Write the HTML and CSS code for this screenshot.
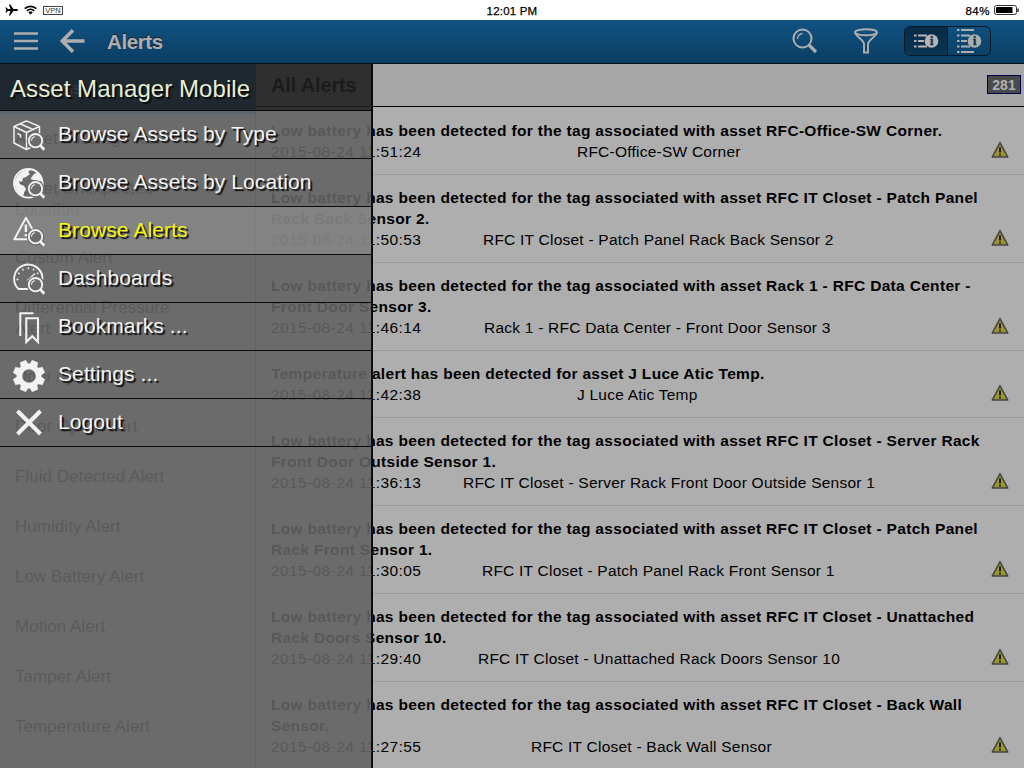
FILE: index.html
```html
<!DOCTYPE html>
<html lang="en">
<head>
<meta charset="utf-8">
<title>Alerts</title>
<link rel="stylesheet" href="styles.css">
</head>
<body>
<svg class="defs" width="0" height="0">
  <symbol id="lens" viewBox="0 0 32 32">
    <circle class="halo" cx="22.5" cy="20.7" r="8.8"/>
    <path class="halo-line" d="M27 25L31 29.500"/>
    <circle cx="22.5" cy="20.7" r="6.7" fill="none" stroke="#f2f2f2" stroke-width="1.800"/>
    <path d="M18.600 20.700a3.900 3.900 0 0 1 3.400-3.900" fill="none" stroke="#f2f2f2" stroke-width="1.100"/>
    <path d="M27.300 25.500L31.400 29.700" stroke="#f2f2f2" stroke-width="2.800"/>
  </symbol>
  <symbol id="warn" viewBox="0 0 18 18">
    <path d="M9 1.600L16.800 16H1.200z" fill="#8f8b2c" stroke="#444" stroke-width="1.500" stroke-linejoin="round"/>
    <path d="M9 4.500L14.600 14.800H3.400z" fill="#9c9730"/>
    <path d="M9 6.300v5.200M9 12.800v1.700" stroke="#222" stroke-width="2"/>
  </symbol>
</svg>
<div class="app">
  <div class="status">
    <div class="status-left">
      <svg width="14" height="12" viewBox="0 0 14 12"><path d="M13 6c0-.7-.8-1-1.600-1H8.400L5.200 .5H3.900L5.500 5H2.800L1.600 3.500H.5L1.300 6 .5 8.500h1.100L2.800 7h2.700L3.900 11.500h1.300L8.400 7h3C12.200 7 13 6.700 13 6z" fill="#000"/></svg>
      <svg class="wifi" width="13" height="10" viewBox="0 0 13 10"><path d="M.8 3.700a8.200 8.200 0 0 1 11.400 0M2.900 5.900a5.200 5.200 0 0 1 7.200 0" fill="none" stroke="#000" stroke-width="1.700"/><path d="M6.500 9.600L4.300 7.400a3.200 3.200 0 0 1 4.400 0z"/></svg>
      <span class="vpn">VPN</span>
    </div>
    <div class="clock">12:01 PM</div>
    <div class="status-right"><span class="pct">84%</span>
      <svg width="25" height="11" viewBox="0 0 25 11"><rect x=".5" y=".5" width="22" height="9" rx="2" fill="#fff" stroke="#333"/><rect x="2" y="2" width="16.500" height="6" rx=".5"/><path d="M24 3.500v3.500" stroke="#333" stroke-width="1.500"/></svg>
    </div>
  </div>
  <header class="toolbar">
    <svg class="burger" width="24" height="20" viewBox="0 0 24 20"><path d="M0 2.500h24M0 10h24M0 17.500h24" stroke="#aeaeae" stroke-width="2.600"/></svg>
    <svg class="back" width="25" height="24" viewBox="0 0 25 24"><path d="M24.500 12H3M13 1.300L2.300 12 13 22.700" fill="none" stroke="#aeaeae" stroke-width="3.600"/></svg>
    <h1 class="title">Alerts</h1>
    <div class="tools">
      <svg width="26" height="26" viewBox="0 0 26 26" fill="none" stroke="#aeaeae"><circle cx="10.500" cy="10.500" r="9" stroke-width="2"/><path d="M5.500 11a5.300 5.300 0 0 1 5-5.500" stroke-width="1.300"/><path d="M16.500 16.500L24 24" stroke-width="3.200"/></svg>
      <svg class="funnel" width="26" height="26" viewBox="0 0 26 26" fill="none" stroke="#aeaeae" stroke-width="1.900"><ellipse cx="13" cy="4.300" rx="11" ry="3"/><path d="M2 4.500c0 3 9 8 9 11.500V24.500h4V16c0-3.500 9-8.500 9-11.500"/></svg>
      <div class="segment">
        <div class="seg on"><svg width="26" height="26" viewBox="0 0 26 26"><path d="M1 7.500h2.500M1 13h2.500M1 18.500h2.500M5 7.500h9M5 13h6M5 18.500h9" stroke="#b4b4b4" stroke-width="1.900"/><circle cx="18.500" cy="13" r="6.800" fill="#b4b4b4"/><text x="18.600" y="17" class="info">i</text></svg></div>
        <div class="seg"><svg width="26" height="26" viewBox="0 0 26 26"><path d="M1 2h2.500M1 7.500h2.500M1 13h2.500M1 18.500h2.500M1 24h2.500M5 2h13M5 7.500h9M5 13h6M5 18.500h9M5 24h13" stroke="#aeaeae" stroke-width="1.900"/><circle cx="18.500" cy="13" r="6.800" fill="#aeaeae"/><text x="18.600" y="17" class="info">i</text></svg></div>
      </div>
    </div>
  </header>
  <main class="body">
    <ul class="types">
      <li class="sel">All Alerts</li>
      <li>Asset Missing Alert</li>
      <li>Asset Unexpected Location</li>
      <li>Custom Alert</li>
      <li>Differential Pressure Alert</li>
      <li>Door Ajar Alert</li>
      <li>Door Open Alert</li>
      <li>Fluid Detected Alert</li>
      <li>Humidity Alert</li>
      <li>Low Battery Alert</li>
      <li>Motion Alert</li>
      <li>Tamper Alert</li>
      <li>Temperature Alert</li>
    </ul>
    <section class="alerts">
      <div class="alerts-head"><h2>All Alerts</h2><span class="count">281</span></div>
      <article class="row r1"><p class="msg">Low battery has been detected for the tag associated with asset RFC-Office-SW Corner.</p><div class="meta"><span class="date">2015-08-24 11:51:24</span><span class="name">RFC-Office-SW Corner</span><svg class="warn"><use href="#warn"/></svg></div></article>
      <article class="row r2"><p class="msg">Low battery has been detected for the tag associated with asset RFC IT Closet - Patch Panel<br>Rack Back Sensor 2.</p><div class="meta"><span class="date">2015-08-24 11:50:53</span><span class="name">RFC IT Closet - Patch Panel Rack Back Sensor 2</span><svg class="warn"><use href="#warn"/></svg></div></article>
      <article class="row r3"><p class="msg">Low battery has been detected for the tag associated with asset Rack 1 - RFC Data Center -<br>Front Door Sensor 3.</p><div class="meta"><span class="date">2015-08-24 11:46:14</span><span class="name">Rack 1 - RFC Data Center - Front Door Sensor 3</span><svg class="warn"><use href="#warn"/></svg></div></article>
      <article class="row r4"><p class="msg">Temperature alert has been detected for asset J Luce Atic Temp.</p><div class="meta"><span class="date">2015-08-24 11:42:38</span><span class="name">J Luce Atic Temp</span><svg class="warn"><use href="#warn"/></svg></div></article>
      <article class="row r5"><p class="msg">Low battery has been detected for the tag associated with asset RFC IT Closet - Server Rack<br>Front Door Outside Sensor 1.</p><div class="meta"><span class="date">2015-08-24 11:36:13</span><span class="name">RFC IT Closet - Server Rack Front Door Outside Sensor 1</span><svg class="warn"><use href="#warn"/></svg></div></article>
      <article class="row r6"><p class="msg">Low battery has been detected for the tag associated with asset RFC IT Closet - Patch Panel<br>Rack Front Sensor 1.</p><div class="meta"><span class="date">2015-08-24 11:30:05</span><span class="name">RFC IT Closet - Patch Panel Rack Front Sensor 1</span><svg class="warn"><use href="#warn"/></svg></div></article>
      <article class="row r7"><p class="msg">Low battery has been detected for the tag associated with asset RFC IT Closet - Unattached<br>Rack Doors Sensor 10.</p><div class="meta"><span class="date">2015-08-24 11:29:40</span><span class="name">RFC IT Closet - Unattached Rack Doors Sensor 10</span><svg class="warn"><use href="#warn"/></svg></div></article>
      <article class="row r8"><p class="msg">Low battery has been detected for the tag associated with asset RFC IT Closet - Back Wall<br>Sensor.</p><div class="meta"><span class="date">2015-08-24 11:27:55</span><span class="name">RFC IT Closet - Back Wall Sensor</span><svg class="warn"><use href="#warn"/></svg></div></article>
    </section>
    <nav class="menu">
      <div class="menu-head"><span>Asset Manager Mobile</span></div>
      <div class="menu-body">
      <a class="item i1"><svg viewBox="0 0 32 32"><path d="M1 6.500L13.500 .9 26.500 6.500V23L13.500 29.500 1 23zM1 6.500l12.500 6 13-6M13.500 12.500v17M7 3.700l13 5.800M4.500 13.500l3 1.500v2.500" fill="none" stroke="#f2f2f2" stroke-width="1.500" stroke-linejoin="round"/><use href="#lens"/></svg><span>Browse Assets by Type</span></a>
      <a class="item i2"><svg viewBox="0 0 32 32"><circle cx="15.300" cy="15.300" r="14.300" fill="none" stroke="#f2f2f2" stroke-width="1.900"/><path d="M4 8C8 3 12 1 18 1.500L15 4l2 2-4 3-3 1-1 4-3-1 1 3 4 2 2 3-2 4-1 5C5 25 1.500 20 1.500 14zM20 7l4-3c3 2 5 5 5.500 9l-5 1-4-2-3-1 2-3z" fill="#f2f2f2"/><use href="#lens"/></svg><span>Browse Assets by Location</span></a>
      <a class="item i3 active"><svg viewBox="0 0 32 32"><path d="M13 1.800L25 23.300H1.300z" fill="none" stroke="#f2f2f2" stroke-width="1.900" stroke-linejoin="round"/><path d="M12.900 8.500v7.500M12.900 18v2.500" stroke="#f2f2f2" stroke-width="2.400"/><use href="#lens"/></svg><span>Browse Alerts</span></a>
      <a class="item i4"><svg viewBox="0 0 32 32"><path d="M6 25.500A14.200 14.200 0 1 1 29.500 15.500M5.300 25H15" fill="none" stroke="#f2f2f2" stroke-width="1.900"/><path d="M3.500 15.500h2M5 8.800l1.800 1.200M9.500 4.700l.9 1.800M15.300 3.300v2M21 4.700l-.9 1.800M25.500 8.800l-1.700 1.200M14.500 16.500L22 9.500" stroke="#f2f2f2" stroke-width="1.300"/><use href="#lens"/></svg><span>Dashboards</span></a>
      <a class="item i5"><svg viewBox="0 0 32 32"><path d="M7.300 24V1.300H20.500" fill="none" stroke="#f2f2f2" stroke-width="2"/><path d="M13.300 6.300H25V30l-5.800-5.800L13.300 30z" fill="none" stroke="#f2f2f2" stroke-width="2.100"/></svg><span>Bookmarks ...</span></a>
      <a class="item i6"><svg viewBox="-16 -16 32 32"><circle r="9.600" fill="none" stroke="#f2f2f2" stroke-width="5.600"/><g fill="#f2f2f2"><path d="M-4.200-10.500L-3.200-16H3.200L4.200-10.500V-9H-4.200z" transform="rotate(22.500)"/><path d="M-4.200-10.500L-3.200-16H3.200L4.200-10.500V-9H-4.200z" transform="rotate(67.500)"/><path d="M-4.200-10.500L-3.200-16H3.200L4.200-10.500V-9H-4.200z" transform="rotate(112.500)"/><path d="M-4.200-10.500L-3.200-16H3.200L4.200-10.500V-9H-4.200z" transform="rotate(157.500)"/><path d="M-4.200-10.500L-3.200-16H3.200L4.200-10.500V-9H-4.200z" transform="rotate(202.500)"/><path d="M-4.200-10.500L-3.200-16H3.200L4.200-10.500V-9H-4.200z" transform="rotate(247.500)"/><path d="M-4.200-10.500L-3.200-16H3.200L4.200-10.500V-9H-4.200z" transform="rotate(292.500)"/><path d="M-4.200-10.500L-3.200-16H3.200L4.200-10.500V-9H-4.200z" transform="rotate(337.500)"/></g></svg><span>Settings ...</span></a>
      <a class="item i7"><svg viewBox="0 0 32 32"><path d="M4.500 3L27.500 26M27.500 3L4.500 26" stroke="#f2f2f2" stroke-width="4"/></svg><span>Logout</span></a>
      </div>
    </nav>
  </main>
</div>
</body>
</html>
```
FILE: styles.css
```css
* { box-sizing: border-box; }
body { margin: 0; font-family: "Liberation Sans", Arial, sans-serif; background: #aeaeae; }
h1, h2, p, ul { margin: 0; padding: 0; }
svg { display: block; flex: none; }
.defs { position: absolute; }
.app { width: 1024px; height: 768px; overflow: hidden; display: flex; flex-direction: column; }

.status { height: 20px; background: #fff; display: grid; grid-template-columns: 1fr auto 1fr; align-items: center; font-size: 11.5px; color: #000; -webkit-text-stroke: .25px #000; flex: none; }
.status-left { display: flex; align-items: center; padding-left: 5px; }
.wifi { margin-left: 5px; }
.vpn { margin-left: 6px; width: 20px; height: 9px; border: 1px solid #444; font-size: 7.5px; line-height: 7px; text-align: center; color: #333; -webkit-text-stroke: 0; }
.clock { letter-spacing: .2px; padding-top: 1px; }
.status-right { display: flex; justify-content: flex-end; align-items: center; gap: 4px; padding-right: 5px; }
.pct { letter-spacing: .5px; padding-top: 1px; }

.toolbar { height: 44px; flex: none; display: flex; align-items: center; padding: 0 0 1px 14px; background: linear-gradient(#105283, #0b3e62); border-bottom: 1px solid #04101a; }
.back { margin-left: 22px; }
.title { margin: 2px 0 0 22px; font-size: 20.5px; line-height: 24px; font-weight: bold; color: #aeaeae; text-shadow: 0 -1px 1px #222; letter-spacing: -.4px; }
.tools { margin-left: auto; display: flex; align-items: center; padding-right: 33px; }
.funnel { margin-left: 35px; }
.segment { margin-left: 25px; width: 87px; height: 30px; border: 1px solid #04192a; border-radius: 6px; display: flex; overflow: hidden; }
.seg { flex: 1; display: flex; align-items: center; justify-content: center; }
.seg.on { background: linear-gradient(#072b47, #0b3552); border-right: 1px solid #04192a; }
.info { font: bold 12px "Liberation Serif", serif; fill: #0c3553; text-anchor: middle; stroke: #0c3553; stroke-width: .5px; }

.body { flex: 1; min-height: 0; display: flex; position: relative; }
.types { width: 256px; flex: none; list-style: none; background: #a9a9a9; border-right: 1px solid #555; font-size: 17px; line-height: 21px; color: #161616; }
.types li { min-height: 50px; padding: 14px 75px 13px 15px; border-bottom: 1px solid #a6a6a6; letter-spacing: .04px; }
.types li:nth-child(3), .types li:nth-child(5) { height: 69px; padding-bottom: 0; }
.types .sel { background: #2a6ea5; color: #eee; border-bottom-color: #2a6ea5; }
.alerts { flex: 1; min-width: 0; }
.alerts-head { height: 43px; margin-bottom: 1px; border-bottom: 1px solid #000; background: #a7a7a7; display: flex; align-items: center; justify-content: space-between; padding: 0 3px 0 15px; }
.alerts-head h2 { font-size: 20px; line-height: 24px; color: #000; letter-spacing: -.15px; }
.count { width: 34px; height: 19px; margin-bottom: 1px; border: 1px solid #00004d; background: #4a4a4a; color: #b0b0b0; font-size: 14px; font-weight: bold; line-height: 18px; text-align: center; }
.row { padding: 12px 15px 12px; border-bottom: 1px solid #9c9c9c; font-size: 15.5px; line-height: 21px; color: #000; }
.msg { font-weight: bold; white-space: nowrap; letter-spacing: .32px; }
.meta { display: flex; align-items: center; height: 21px; white-space: nowrap; letter-spacing: .23px; }
.date { width: 151px; letter-spacing: .39px; }
.name { margin-left: 155px; }
.warn { width: 18px; height: 18px; margin: 0 0 3px auto; }
.r2 .name { margin-left: 61px; }
.r3 .name { margin-left: 62px; }
.r5 .name { margin-left: 41px; }
.r6 .name { margin-left: 60px; }
.r7 .name { margin-left: 56px; }
.r8 .name { margin-left: 109px; }

.menu { position: absolute; left: 0; top: 0; bottom: 0; width: 373px; display: flex; flex-direction: column; border-right: 2px solid #0c0c0c; }
.menu-head { height: 47px; flex: none; background: rgba(31, 31, 31, .88); border-bottom: 1px solid #0a0a0a; padding-left: 10px; line-height: 49px; font-size: 24px; letter-spacing: .07px; color: #e8efd5; text-shadow: 2px 2px 1px #0a0a0a; white-space: nowrap; }
.menu-body { flex: 1; background: rgba(99, 99, 99, .89); }
.item { height: 48px; display: flex; align-items: center; padding-left: 13px; border-bottom: 1px solid #0c0c0c; font-size: 21px; letter-spacing: .1px; color: #f2f2f2; text-shadow: 2px 2px 1px #0c0c0c; white-space: nowrap; }
.item svg { width: 32px; height: 32px; margin-right: 13px; margin-top: 3px; overflow: visible; }
.item span { padding-bottom: 2px; }
.item.active { background: rgba(155, 155, 155, .5); color: #f5f50a; }
.halo { fill: #6b6b6b; }
.halo-line { stroke: #6b6b6b; stroke-width: 5; }
.active .halo { fill: #838383; }
.active .halo-line { stroke: #838383; }
```
